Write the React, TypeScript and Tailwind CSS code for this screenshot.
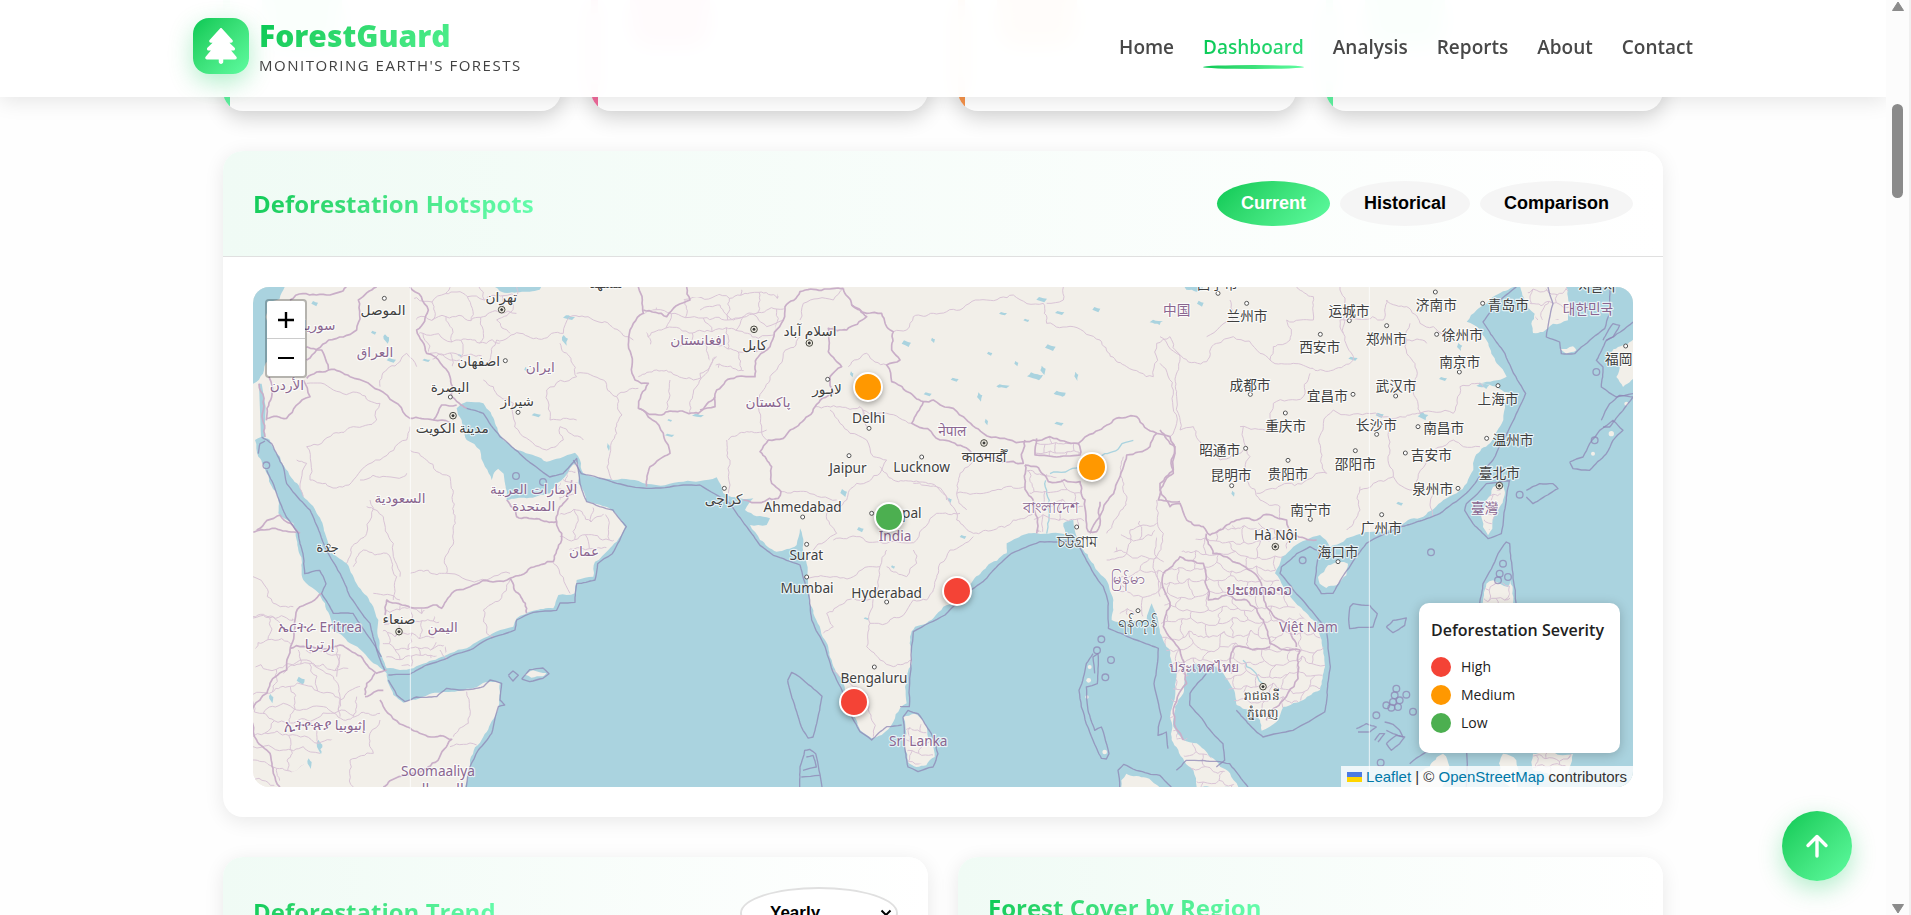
import React from "react";
import { FaTree } from "react-icons/fa6";

type Pt = [number, number];

/* ---------- geometry helpers ---------- */

function seeded(seed: number) {
  let s = seed % 2147483647;
  if (s <= 0) s += 2147483646;
  return () => {
    s = (s * 16807) % 2147483647;
    return s / 2147483647 - 0.5;
  };
}

function parse(text: string): Pt[] {
  return text
    .trim()
    .split(/\s+/)
    .map((p) => p.split(",").map(Number) as Pt);
}

/* Subdivides a polyline by midpoint displacement so that it reads as a surveyed border. */
function rough(text: string, amp = 0.16, closed = false): string {
  let pts = parse(text);
  if (closed) pts = [...pts, pts[0]];
  const rnd = seeded(Math.round(pts[0][0] * 31 + pts[0][1] * 17 + pts.length * 101));
  const out: Pt[] = [pts[0]];
  const split = (a: Pt, b: Pt, depth: number) => {
    const dx = b[0] - a[0];
    const dy = b[1] - a[1];
    const length = Math.hypot(dx, dy);
    if (depth === 0 || length < 14 || length > 600) {
      out.push(b);
      return;
    }
    const k = rnd() * 2 * amp;
    const m: Pt = [(a[0] + b[0]) / 2 - dy * k, (a[1] + b[1]) / 2 + dx * k];
    split(a, m, depth - 1);
    split(m, b, depth - 1);
  };
  for (let i = 1; i < pts.length; i++) split(pts[i - 1], pts[i], 4);
  return "M" + out.map((p) => `${p[0].toFixed(0)},${p[1].toFixed(0)}`).join("L") + (closed ? "Z" : "");
}

/* Irregular honeycomb of province borders that covers a rectangle. */
function mesh(x: number, y: number, w: number, h: number, cell: number): string {
  const rnd = seeded(x * 7 + y * 13 + cell);
  const cols = Math.ceil(w / cell) + 1;
  const rows = Math.ceil(h / cell) + 1;
  const node: Pt[][] = [];
  for (let r = 0; r <= rows; r++) {
    node[r] = [];
    for (let c = 0; c <= cols; c++) {
      node[r][c] = [x + c * cell + rnd() * cell * 0.7, y + r * cell + rnd() * cell * 0.7];
    }
  }
  const seg = (a: Pt, b: Pt) => rough(`${a[0]},${a[1]} ${b[0]},${b[1]}`, 0.2);
  let d = "";
  for (let r = 0; r <= rows; r++) {
    for (let c = 0; c <= cols; c++) {
      if (c < cols) d += seg(node[r][c], node[r][c + 1]);
      if (r < rows && (r + c) % 2 === 0) d += seg(node[r][c], node[r + 1][c]);
    }
  }
  return d;
}

/* ---------- map data: three units to the pixel ---------- */

const ocean =
  "636,1500 651,1419 691,1349 726,1289 739,1249 741,1189 711,1184 631,1209 561,1217 501,1234 451,1247 421,1224 406,1189 401,1159 361,1129 291,1069 236,1024 216,949 151,879 146,819 131,759 121,709 76,679 71,619 41,559 16,509 6,459 24,450 51,459 81,509 121,579 151,629 191,679 216,739 226,789 281,829 316,899 361,959 376,999 379,1079 401,1144 441,1149 481,1144 521,1127 591,1099 641,1084 681,1059 781,1019 791,994 841,971 901,964 916,924 966,919 971,879 1021,869 1026,824 1066,789 1091,764 1116,719 1076,669 1001,644 976,589 971,524 936,569 891,619 821,634 761,639 756,589 731,549 716,579 696,539 681,489 641,459 626,399 611,364 641,344 691,349 726,409 751,459 811,494 881,524 921,514 966,497 981,519 991,559 1081,579 1181,591 1291,584 1391,571 1411,619 1461,634 1501,634 1476,669 1551,694 1541,714 1491,714 1521,759 1571,794 1631,774 1641,724 1651,769 1659,819 1666,909 1681,979 1716,1059 1736,1119 1771,1189 1796,1269 1821,1329 1856,1354 1886,1344 1921,1304 1941,1264 1961,1249 1956,1199 1976,1129 1971,1049 1986,1019 2041,994 2071,959 2111,949 2161,879 2201,839 2261,799 2261,769 2291,754 2351,739 2441,744 2431,709 2461,699 2471,749 2491,789 2511,819 2551,869 2581,939 2576,999 2631,1004 2681,999 2696,949 2721,1039 2751,1089 2771,1159 2766,1229 2751,1289 2756,1359 2776,1389 2821,1449 2831,1500 2956,1500 2931,1459 2901,1439 2871,1409 2831,1369 2791,1359 2761,1319 2766,1259 2791,1219 2801,1159 2821,1129 2881,1134 2911,1159 2936,1199 2951,1254 2991,1269 3021,1299 3026,1331 3071,1304 3091,1259 3151,1239 3201,1209 3216,1139 3206,1059 3181,999 3141,959 3091,899 3066,859 3086,809 3121,779 3161,759 3201,744 3231,779 3281,754 3361,734 3441,714 3511,689 3571,639 3611,619 3661,549 3666,509 3711,469 3751,399 3756,349 3781,324 3731,299 3681,289 3761,269 3731,229 3706,169 3681,129 3641,104 3671,69 3721,29 3781,0 3783,-20 4200,-20 4200,1520 636,1520";

const waters = [
  "0,20 25,0 95,0 80,35 45,50 38,90 48,180 30,260 0,290",
  "705,-10 740,12 800,16 860,8 870,-10",
  "2790,-10 2800,8 2830,14 2850,10 2850,-10",
];

const lakes: [number, number, number, number][] = [
  [143, 1181, 12, 12], [948, 92, 18, 7], [936, 160, 9, 16], [400, 156, 8, 14], [850, 385, 14, 6],
  [1250, 445, 14, 5], [1335, 386, 18, 5], [415, 220, 14, 7], [185, 50, 10, 8], [362, 137, 8, 6],
  [2346, 268, 24, 12], [2420, 320, 18, 9], [2392, 182, 16, 10], [2024, 322, 12, 6], [2105, 278, 12, 6],
  [2250, 298, 20, 6], [2180, 330, 8, 14], [2366, 38, 16, 8], [2420, 78, 14, 6], [2250, 80, 12, 5],
  [2710, 106, 20, 8], [2530, 68, 12, 8], [2418, 410, 14, 6], [2200, 405, 5, 10], [2040, 160, 6, 8],
  [1960, 170, 14, 10], [2320, 100, 9, 5], [2210, 200, 8, 6], [2290, 230, 6, 8], [2470, 268, 6, 14],
  [1822, 728, 10, 8], [3570, 276, 12, 6], [3690, 296, 20, 10], [3510, 388, 16, 12], [3380, 385, 12, 8],
  [3620, 180, 8, 12], [3300, 215, 14, 6], [2940, 620, 5, 9], [1772, 618, 10, 12], [2090, 640, 6, 8],
  [1796, 262, 5, 9], [2370, 250, 8, 14], [200, 1380, 8, 22], [170, 1430, 6, 16], [55, 1235, 6, 14],
  [2842, 50, 10, 9], [1920, 840, 6, 5], [1840, 995, 8, 4], [620, 205, 6, 4], [520, 220, 12, 5],
  [2130, 750, 10, 6], [3440, 650, 10, 6], [1250, 400, 7, 4], [1066, 480, 4, 12], [820, 248, 6, 8],
];

const islands = [
  "1950,1290 1985,1280 2015,1310 2040,1370 2045,1410 2020,1435 1990,1440 1965,1425 1955,1380 1960,1340",
  "815,1163 840,1150 880,1158 870,1168 835,1172",
  "3195,870 3225,835 3260,825 3285,830 3280,865 3250,895 3220,903 3200,890",
  "3700,640 3720,600 3745,590 3752,600 3740,660 3718,725 3705,745 3690,720 3685,680",
  "3790,-20 3945,-20 3955,60 3945,100 3900,110 3870,135 3840,138 3835,110 3845,80 3815,40",
  "3920,185 3960,178 3970,190 3940,200",
  "4060,210 4110,175 4160,150 4160,260 4110,300 4090,270 4100,235 4075,230",
  "2605,1480 2620,1460 2680,1472 2740,1520 2610,1520",
  "3700,890 3720,880 3765,900 3772,880 3775,960 3690,960",
  "3840,1400 3900,1395 3960,1400 3950,1440 3920,1480 3840,1450",
  "3460,1520 3530,1440 3570,1400 3590,1440 3560,1520",
  "3750,1400 3790,1420 3800,1520 3740,1460",
];

const countryBorders = [
  "1341,369 1386,359 1391,309 1451,269 1506,269 1516,209 1551,179 1591,99 1596,59 1641,14 1771,4",
  "1771,4 1796,54 1841,89 1781,129 1726,124 1726,194 1766,239 1731,269 1741,319 1686,359 1641,409 1591,454 1546,459 1521,494 1556,539 1556,589 1584,614 1576,634 1471,639",
  "1796,54 1841,79 1886,79 1921,134 1916,189 1941,219 1901,234 1916,284 2011,344 2041,339 2131,389 2191,439 2241,454 2341,459 2391,449 2476,469 2521,439 2581,399 2651,389 2711,439 2751,449 2766,499 2761,549 2721,589 2716,639 2781,644",
  "2011,344 1976,409 2061,459 2131,479 2191,509 2311,529 2316,459",
  "2351,454 2346,504 2401,509 2481,504 2476,469",
  "2316,534 2351,539 2386,584 2481,584 2496,639 2506,734 2531,734 2541,644",
  "2316,534 2316,599 2346,649 2351,739",
  "2711,439 2691,479 2621,504 2591,589 2561,644 2511,739",
  "1156,0 1171,79 1141,109 1146,279 1186,289 1156,364 1226,384 1336,379 1386,329",
  "1156,364 1231,439 1251,499 1191,539 1181,599",
  "1171,69 1241,89 1311,39 1301,0",
  "471,0 526,69 491,129 521,199 591,269 596,329 641,364",
  "111,39 150,20 231,24 280,0",
  "161,219 311,129 316,39 371,0",
  "161,274 226,249 206,189 161,179",
  "226,249 291,269 471,394 541,399 566,354 611,354",
  "541,399 591,407",
  "41,394 101,394 171,329 151,279",
  "18,290 28,380 36,450",
  "48,270 56,330 40,400",
  "396,984 401,939 551,954 566,964 611,909 771,874 901,824 926,759 926,739 911,704",
  "771,874 821,979",
  "761,639 791,689 911,704 931,649 956,579",
  "206,919 141,959 126,999 111,1089 101,1149 51,1189 21,1239 1,1259 11,1359 51,1399 61,1459 81,1500",
  "111,1084 191,1084 261,1074 371,1159 401,1149",
  "336,1224 341,1189 366,1159",
  "336,1229 391,1210",
  "381,1239 391,1259 461,1319 596,1357 491,1459 391,1500",
  "1,736 131,736",
  "11,729 81,684 141,739",
  "2721,429 2766,479 2761,559 2721,609 2751,659 2781,649 2801,699 2851,719 2871,744 2921,714 2951,699 3011,699 3031,684 3101,699 3121,744 3191,759",
  "2731,859 2781,809 2851,829 2866,939 2921,924 2981,939 3031,999 3051,1069 3141,1089 3136,1149 3091,1239 3040,1300",
  "2946,1079 3051,1079",
  "2946,1079 2931,1119 2936,1159",
  "2731,859 2751,959 2731,1019 2781,1089 2801,1189 2761,1279 2791,1359",
  "2860,740 2880,800 2960,830 3020,880 3040,960 3100,1010 3130,1080",
];

const stateBorders = [
  "1341,69 1401,54 1441,99 1496,79 1541,119 1591,99",
  "1641,99 1651,49 1741,39 1771,4",
  "1516,339 1551,279 1571,249 1591,199 1641,149",
  "1426,459 1481,434 1541,429",
  "1516,339 1526,429 1541,459",
  "1426,619 1431,519 1421,459",
  "1686,359 1761,359 1821,359 1831,389",
  "1731,369 1761,409 1791,439 1841,459 1861,509 1901,519 1881,559 1811,589 1781,639",
  "1786,239 1841,199 1901,234",
  "1841,419 1831,369 1901,379 1976,409",
  "1881,539 1921,579 1981,584 2051,599 2081,639",
  "1584,614 1661,614 1751,639",
  "1681,789 1751,739 1721,679 1781,639",
  "1741,759 1821,749 1901,769 1991,759 2051,679 2121,679",
  "1981,589 2051,599 2086,639 2111,699",
  "2111,619 2191,619 2261,599 2316,599",
  "2111,699 2161,739 2221,729 2281,699 2341,679",
  "2121,559 2111,619 2141,669",
  "2121,559 2181,499",
  "1651,869 1721,869 1801,869 1881,839 1901,789",
  "1721,979 1781,939 1861,929 1881,839",
  "1861,929 1851,1009 1901,1009 1981,939 2021,939",
  "1901,839 1961,869 1991,829 1981,789",
  "1851,1009 1841,1079 1881,1119 1921,1139 1976,1119",
  "2021,939 2061,829 2091,789 2161,749",
  "1736,1149 1801,1199 1841,1219 1861,1349",
  "1711,1039 1741,1019 1721,979",
  "1921,134 1961,129 1981,89 2041,79 2121,69 2201,39 2281,24 2371,49",
  "2371,49 2381,109 2461,119 2541,159 2621,239 2701,269 2711,169 2751,149 2781,209",
  "2431,0 2431,39 2381,49",
  "2751,449 2771,409 2761,309 2721,229",
  "2721,149 2791,214 2861,224 2891,169 2941,149 3021,199 3051,219 3061,179 3111,159 3101,99 3181,99 3181,29 3131,0",
  "2861,149 2901,119 2941,99 2931,39",
  "3051,219 3121,229 3241,249 3301,219 3271,139 3261,99 3391,99 3401,39",
  "3271,139 3261,0",
  "3401,39 3461,59 3501,109 3541,119 3601,159",
  "3461,159 3461,199 3491,269 3501,379",
  "3471,109 3461,159 3521,169",
  "3171,259 3151,329 3061,349 3051,379 3051,429 2961,419",
  "3241,369 3211,409 3221,559 3161,579 3011,619",
  "3241,369 3341,379 3441,389 3501,379 3601,379 3621,299 3691,299",
  "3421,399 3411,489 3421,569 3361,589 3321,609",
  "3421,569 3481,609 3521,519 3601,459 3631,479 3681,479",
  "2971,419 2991,509 2981,579 3021,639",
  "3321,599 3321,669 3281,729",
  "3541,619 3541,689",
  "2781,209 2771,329 2781,429 2821,419 2851,479 2901,519 2971,489",
  "3021,639 3081,659 3081,699",
  "2611,509 2621,639 2561,739",
  "2711,639 2731,739 2701,829 2721,929",
  "2561,819 2621,799 2631,729 2711,709",
  "531,199 601,219 671,239 711,219 731,159 801,139 931,139",
  "771,139 731,99 781,59 791,0",
  "931,139 951,89 1021,99 1141,159",
  "691,279 741,329 781,349 801,439 881,489 931,459 921,419 991,459",
  "921,169 971,269 881,309 891,399 971,399",
  "971,259 1051,279 1091,329 1091,439 1071,499 1076,579",
  "1091,329 1156,304",
  "1251,279 1241,369",
  "1311,379 1341,259 1386,209",
  "1156,269 1211,249 1321,279 1391,209",
  "161,289 241,309 321,319 381,349 371,399 301,419",
  "381,299 461,199 491,239",
  "301,419 241,439 161,479 171,579 231,599 301,579 381,519 461,459 471,419",
  "321,579 401,569 451,569 461,559",
  "151,629 161,529 131,519",
  "351,639 341,739 281,829",
  "341,659 391,689 421,769 441,869",
  "471,489 521,519 591,569 601,679 601,739 581,859",
  "471,859 581,859 771,859",
  "901,829 951,919",
  "771,879 741,939 691,969 701,1039 721,1049",
  "301,839 331,789 401,799 431,869 421,939",
  "361,919 441,939",
  "91,1159 161,1119 241,1169 261,1229 261,1289",
  "251,1079 251,1169",
  "0,869 61,949 121,959",
  "0,989 61,989 81,1009",
  "31,1279 91,1249 131,1269 211,1259 271,1299 381,1279",
  "641,1214 646,1309 601,1349",
  "591,1379 671,1374",
  "301,1500 291,1419 361,1399 351,1339 381,1299",
  "0,1379 91,1389 151,1379 201,1399",
  "311,1229 301,1289",
  "581,1119 561,1089",
];

const meshes: { id: string; clip: string; cell: number }[] = [
  { id: "indochina", cell: 40, clip: "2735,859 2781,800 2851,740 3000,700 3121,744 3061,859 3091,899 3206,1059 3216,1139 3201,1209 3091,1259 3026,1320 2951,1254 2911,1159 2821,1129 2766,1259 2761,1319 2871,1409 2950,1500 2836,1500 2780,1390 2751,1300 2771,1159 2721,1039" },
  { id: "bhutan", cell: 22, clip: "2351,464 2391,449 2476,469 2481,504 2401,509 2346,504" },
  { id: "yemen", cell: 36, clip: "400,960 490,955 560,1000 540,1060 600,1090 470,1140 404,1130 384,1050" },
  { id: "afghan", cell: 52, clip: "1171,79 1311,30 1560,0 1596,59 1551,179 1451,269 1341,200 1180,170" },
  { id: "iran", cell: 58, clip: "480,0 800,0 790,80 740,170 620,240 540,220 495,130" },
  { id: "ethiopia", cell: 70, clip: "0,960 130,1000 111,1089 250,1080 336,1224 300,1290 200,1400 60,1500 0,1500" },
  { id: "lanka", cell: 34, clip: "1960,1320 2010,1310 2040,1370 2040,1420 1990,1436 1962,1420" },
  { id: "taiwan", cell: 26, clip: "3705,630 3745,595 3740,660 3710,730 3690,710" },
  { id: "korea", cell: 38, clip: "3820,0 3945,0 3950,90 3850,100" },
  { id: "luzon", cell: 32, clip: "3700,890 3770,890 3775,960 3690,960" },
  { id: "mindanao", cell: 32, clip: "3840,1400 3960,1400 3920,1480 3840,1450" },
  { id: "emirates", cell: 24, clip: "915,600 965,530 975,600 950,640 920,640" },
  { id: "bengal", cell: 44, clip: "2316,540 2480,590 2500,730 2351,735" },
  { id: "oman", cell: 56, clip: "920,680 1000,650 1100,700 1080,770 1030,800 920,780" },
  { id: "burma", cell: 60, clip: "2570,820 2620,700 2700,700 2740,850 2720,940 2690,990 2600,980 2580,900" },
];

const seaBorders = [
  "1341,594 1431,649 1481,719 1521,775 1561,805 1641,834 1666,919 1676,999 1716,1079 1751,1179 1791,1279 1821,1334 1856,1359 1901,1319 1946,1314",
  "1941,1259 1969,1259 1981,1034 2076,984 2111,949 2201,874 2276,799 2361,764 2471,764 2500,820 2551,899 2566,949 2566,1024 2716,1084 2703,1190 2725,1289 2716,1320 2715,1345 2740,1335 2745,1385",
  "1950,1290 1965,1270 1995,1280 2035,1340 2055,1400 2040,1440 1995,1454 1965,1440 1955,1380 1950,1290",
  "1604,1180 1616,1156 1640,1170 1707,1228 1700,1270 1680,1350 1665,1353 1650,1330 1620,1240 1604,1180",
  "1640,1500 1641,1440 1655,1390 1670,1387 1688,1400 1707,1500",
  "1660,1410 1680,1405 1690,1440 1650,1450",
  "1645,1470 1700,1465",
  "26,450 56,470 91,540 101,590 141,639 171,669 201,739 221,789 261,859 291,929 351,1009 371,1089 395,1150",
  "16,500 21,470 36,462",
  "41,550 71,620 100,690 136,740 150,800 155,860 200,850 219,890 206,919 241,979 300,979 340,1040 385,1110",
  "406,1164 470,1162 521,1134 601,1104 651,1089 691,1064 786,1029 791,999 841,976 911,970 921,948 966,946 971,890 1026,879 1034,830 1078,800 1100,760 1120,719 1080,669 1001,644 981,589 971,514 930,560 890,570 811,510 741,449 691,379 641,364",
  "406,1179 431,1224 456,1244 491,1230 551,1229 581,1204 631,1209 691,1199 711,1179 746,1189 741,1239 755,1254 736,1259 716,1339 676,1389 651,1439 640,1500",
  "766,1165 780,1152 796,1165 780,1182 766,1165",
  "806,1176 830,1148 870,1143 888,1160 870,1174 830,1184 806,1176",
  "961,519 985,560 1091,589 1181,604 1291,594 1341,594",
  "2525,1159 2520,1110 2535,1100 2533,1190 2500,1200 2505,1270 2525,1330 2545,1320 2555,1350 2568,1400 2560,1416 2545,1414 2520,1360 2485,1260 2478,1210 2500,1130 2520,1100",
  "2600,1500 2595,1450 2612,1432 2650,1450 2720,1465 2755,1500",
  "2860,1160 2811,1219 2810,1254 2880,1340 2910,1370 2915,1420 2890,1440",
  "2950,1270 3030,1350 3120,1330 3215,1275 3232,1139 3221,1029 3190,989 3130,920 3081,859 3085,840 3131,800 3171,779",
  "3171,779 3200,794 3185,890 3205,920 3240,919 3340,769 3440,720 3560,680 3640,619 3720,519 3818,319 3800,290 3756,200 3690,105 3740,40 3790,0",
  "3291,959 3300,950 3350,955 3373,980 3360,1020 3290,1025 3288,1010 3291,959",
  "3400,1020 3420,1000 3460,993 3455,1015 3420,1037 3400,1020",
  "3640,650 3700,590 3770,580 3760,640 3745,740 3705,755 3660,710 3635,670 3640,650",
  "3640,1500 3680,950 3690,890 3735,800 3760,765 3770,770 3780,860 3790,960",
  "3885,0 3900,50 3880,150 3920,165 3925,200 3965,200 3985,180 4055,125 4070,80 4070,0",
  "4050,160 4080,110 4100,115 4080,150 4060,160",
  "4140,105 4060,160 4030,220 4050,240 4045,300 4090,330 4140,320",
  "3950,525 3990,510 4010,470 4040,430 4080,400 4110,430 4080,460 4060,500 4010,550 3960,545 3950,525",
  "4045,400 4070,350 4100,325 4140,330 4110,370 4070,420 4050,420",
  "3820,610 3860,590 3900,590 3915,605 3890,620 3840,650 3820,630",
  "3470,1430 3520,1395 3560,1390 3620,1395",
  "3310,1325 3340,1310 3370,1320 3350,1335 3315,1335",
  "3395,1305 3420,1312 3440,1330 3450,1350 3420,1340 3400,1330",
  "3400,1370 3430,1345 3455,1350 3440,1370 3415,1390 3400,1370",
  "3365,1360 3380,1340 3395,1340 3375,1365",
  "2770,1450 2800,1420 2850,1420 2930,1430 2985,1500",
];

const atolls: Pt[] = [
  [2545, 1057], [2532, 1090], [2574, 1119], [2557, 1171], [789, 567], [40, 535], [870, 585], [3149, 820],
  [3534, 796], [3430, 1205], [3425, 1225], [3460, 1223], [3420, 1245], [3435, 1260], [3400, 1255],
  [3370, 1285], [3440, 1240], [3480, 1274], [3415, 1262], [3383, 1427], [4030, 255], [4025, 460], [3800, 623],
  [3740, 860], [3750, 830], [3765, 870], [3735, 880],
];

type Label = { x: number; y: number; t: string; c?: boolean; s?: number };
const labels: Label[] = [
  { x: 390, y: 85, t: "الموصل" }, { x: 198, y: 130, t: "سوريا", c: true }, { x: 366, y: 210, t: "العراق", c: true },
  { x: 102, y: 308, t: "الأردن", c: true }, { x: 745, y: 46, t: "تهران" }, { x: 677, y: 238, t: "اصفهان" },
  { x: 862, y: 256, t: "ایران", c: true }, { x: 591, y: 315, t: "البصرة" }, { x: 793, y: 358, t: "شیراز" },
  { x: 598, y: 438, t: "مدينة الكويت" }, { x: 441, y: 648, t: "السعودية", c: true },
  { x: 842, y: 622, t: "الإمارات العربية", c: true }, { x: 842, y: 672, t: "المتحدة", c: true },
  { x: 224, y: 794, t: "جدة" }, { x: 993, y: 807, t: "عمان", c: true }, { x: 438, y: 1010, t: "صنعاء" },
  { x: 569, y: 1035, t: "اليمن", c: true }, { x: 201, y: 1035, t: "ኤርትራ Eritrea", c: true },
  { x: 200, y: 1086, t: "إرتريا", c: true }, { x: 216, y: 1328, t: "ኢትዮጵያ إثيوبيا", c: true },
  { x: 555, y: 1468, t: "Soomaaliya", c: true }, { x: 560, y: 1518, t: "الصومال", c: true },
  { x: 1060, y: 2, t: "مشهد" },
  { x: 1335, y: 174, t: "افغانستان", c: true }, { x: 1505, y: 188, t: "کابل" }, { x: 1671, y: 146, t: "اسلام آباد" },
  { x: 1722, y: 322, t: "لاہور" }, { x: 1545, y: 361, t: "پاکستان", c: true }, { x: 1412, y: 650, t: "کراچی" },
  { x: 1847, y: 408, t: "Delhi" }, { x: 1785, y: 558, t: "Jaipur" }, { x: 2006, y: 554, t: "Lucknow" },
  { x: 2098, y: 446, t: "नेपाल", c: true }, { x: 2193, y: 526, t: "काठमाडौँ" }, { x: 1649, y: 675, t: "Ahmedabad" },
  { x: 1938, y: 694, t: "Bhopal" }, { x: 1926, y: 762, t: "India", c: true },
  { x: 2393, y: 678, t: "বাংলাদেশ", c: true, s: 44 }, { x: 2471, y: 780, t: "চট্টগ্রাম", s: 44 },
  { x: 1660, y: 820, t: "Surat" }, { x: 1662, y: 918, t: "Mumbai" }, { x: 1901, y: 932, t: "Hyderabad" },
  { x: 1863, y: 1188, t: "Bengaluru" }, { x: 1996, y: 1377, t: "Sri Lanka", c: true },
  { x: 2624, y: 892, t: "မြန်မာ", c: true, s: 44 }, { x: 2655, y: 1020, t: "ရန်ကုန်", s: 44 },
  { x: 3019, y: 925, t: "ປະເທດລາວ", c: true }, { x: 3166, y: 1035, t: "Việt Nam", c: true },
  { x: 2854, y: 1154, t: "ประเทศไทย", c: true }, { x: 3028, y: 1240, t: "រាជធានី", s: 36 }, { x: 3028, y: 1290, t: "ភ្នំពេញ", s: 36 },
  { x: 2771, y: 84, t: "中国", c: true }, { x: 2982, y: 101, t: "兰州市" }, { x: 3288, y: 87, t: "运城市" },
  { x: 3550, y: 70, t: "济南市" }, { x: 3766, y: 69, t: "青岛市" }, { x: 4005, y: 80, t: "대한민국", c: true },
  { x: 4032, y: 12, t: "서울시" }, { x: 2893, y: 5, t: "西宁市" }, { x: 3400, y: 171, t: "郑州市" },
  { x: 3628, y: 160, t: "徐州市" }, { x: 3200, y: 196, t: "西安市" }, { x: 3620, y: 240, t: "南京市" },
  { x: 4097, y: 231, t: "福岡" }, { x: 2991, y: 309, t: "成都市" }, { x: 3223, y: 342, t: "宜昌市" },
  { x: 3429, y: 312, t: "武汉市" }, { x: 3735, y: 351, t: "上海市" }, { x: 3098, y: 432, t: "重庆市" },
  { x: 3370, y: 428, t: "长沙市" }, { x: 3572, y: 439, t: "南昌市" }, { x: 3780, y: 474, t: "温州市" },
  { x: 2900, y: 505, t: "昭通市" }, { x: 3105, y: 576, t: "贵阳市" }, { x: 3307, y: 545, t: "邵阳市" },
  { x: 3535, y: 518, t: "吉安市" }, { x: 2934, y: 580, t: "昆明市" }, { x: 3739, y: 573, t: "臺北市" },
  { x: 3539, y: 622, t: "泉州市" }, { x: 3695, y: 678, t: "臺灣", c: true }, { x: 3173, y: 683, t: "南宁市" },
  { x: 3385, y: 738, t: "广州市" }, { x: 3068, y: 759, t: "Hà Nội" }, { x: 3255, y: 811, t: "海口市" },
];

const towns: Pt[] = [
  [394, 34], [757, 221], [592, 330], [795, 376], [226, 778], [1724, 277], [1848, 424], [1788, 506], [2006, 510],
  [1414, 604], [1649, 690], [1856, 679], [1661, 772], [1661, 870], [1901, 945], [1864, 1140], [2471, 720],
  [2655, 971], [2895, 19], [2981, 49], [3289, 101], [3547, 15], [3689, 49], [3401, 116], [3551, 142], [3202, 142],
  [3619, 255], [4118, 177], [2992, 322], [3300, 322], [3428, 327], [3735, 296], [3097, 378], [3371, 442],
  [3495, 419], [3701, 454], [2978, 484], [3105, 520], [3307, 491], [3457, 498], [2936, 596], [3615, 604],
  [3172, 697], [3386, 683], [3255, 824],
];
const capitals: Pt[] = [
  [746, 68], [600, 386], [438, 1034], [1503, 127], [1669, 168], [2193, 468], [3067, 779], [3739, 596], [3030, 1199],
];

const hotspots = [
  { name: "Himachal Pradesh", level: "Medium", x: 615, y: 100, color: "bg-[#ff9800]" },
  { name: "Assam", level: "Medium", x: 839, y: 180, color: "bg-[#ff9800]" },
  { name: "Madhya Pradesh", level: "Low", x: 636, y: 230, color: "bg-[#4caf50]" },
  { name: "Andhra Pradesh", level: "High", x: 704, y: 304, color: "bg-[#f44336]" },
  { name: "Kerala", level: "High", x: 601, y: 415, color: "bg-[#f44336]" },
];

function BaseMap() {
  return (
    <svg viewBox="0 0 4140 1500" className="h-[500px] w-[1380px]" aria-label="Map of South Asia">
      <defs>
        {meshes.map((m) => (
          <clipPath id={m.id} key={m.id}>
            <path d={rough(m.clip, 0.05, true)} />
          </clipPath>
        ))}
      </defs>
      <rect width="4140" height="1500" fill="#f2efe9" />
      <g fill="#aad3df">
        <path d={rough(ocean, 0.09, true)} />
        {waters.map((w) => <path key={w} d={rough(w, 0.1, true)} />)}
        {lakes.map(([x, y, a, b]) => (
          <path
            key={`${x}-${y}`}
            d={rough(`${x - a},${y} ${x - a / 2},${y - b} ${x + a / 3},${y - b / 2} ${x + a},${y - b / 3} ${x + a / 2},${y + b} ${x - a / 4},${y + b / 2}`, 0.25, true)}
          />
        ))}
        <path d="M18,290L26,290L38,360L34,450L24,455Z" />
      </g>
      <g fill="none" stroke="#aad3df" strokeWidth="4">
        <path d={rough("2391,560 2481,540 2541,510 2600,480 2641,460")} />
        <path d={rough("2381,740 2385,660 2378,580")} />
        <path d={rough("2970,1120 3000,1150 3030,1190")} />
      </g>
      <g fill="#f2efe9">
        {islands.map((w) => <path key={w} d={rough(w, 0.12, true)} />)}
        <path d="M722,560L735,545L752,560L757,600L740,620L724,600Z" />
        <circle cx="4020" cy="500" r="6" /><circle cx="4075" cy="440" r="8" /><circle cx="4120" cy="350" r="6" />
        <circle cx="2510" cy="1140" r="6" /><circle cx="2507" cy="1180" r="7" /><circle cx="2502" cy="1230" r="5" /><circle cx="2555" cy="1395" r="7" />
      </g>
      <g fill="none" stroke="#d9c4d6" strokeWidth="3" strokeLinejoin="round">
        {meshes.map((m) => {
          const pts = parse(m.clip);
          const xs = pts.map((p) => p[0]);
          const ys = pts.map((p) => p[1]);
          const x = Math.min(...xs);
          const y = Math.min(...ys);
          return <path key={m.id} clipPath={`url(#${m.id})`} d={mesh(x - 20, y - 20, Math.max(...xs) - x + 40, Math.max(...ys) - y + 40, m.cell)} />;
        })}
        {stateBorders.map((b) => <path key={b} d={rough(b)} />)}
      </g>
      <g fill="none" stroke="#c9aec8" strokeWidth="5" strokeLinejoin="round">
        {countryBorders.map((b) => <path key={b} d={rough(b, 0.12)} />)}
      </g>
      <g fill="none" stroke="#8e86b4" strokeOpacity="0.75" strokeWidth="4" strokeLinejoin="round">
        {seaBorders.map((b) => <path key={b} d={rough(b, 0.03)} />)}
        {atolls.map(([x, y]) => <circle key={`${x}-${y}`} cx={x} cy={y} r="10" />)}
      </g>
      <g stroke="#ffffff" strokeOpacity="0.75" strokeWidth="3">
        <path d="M472,0V1500M3349,0V1500" />
      </g>
      <g fill="#ffffff" stroke="#555555" strokeWidth="3">
        {towns.map(([x, y]) => <circle key={`${x}-${y}`} cx={x} cy={y} r="6" />)}
        {capitals.map(([x, y]) => (
          <g key={`${x}-${y}`}>
            <circle cx={x} cy={y} r="10" fill="#e9e6dc" stroke="#4c4c44" />
            <circle cx={x} cy={y} r="3" fill="#333333" stroke="#333333" />
          </g>
        ))}
      </g>
      <g
        className="font-['Noto_Sans','Noto_Sans_CJK_SC','DejaVu_Sans',sans-serif]"
        textAnchor="middle"
        stroke="#ffffff"
        strokeOpacity="0.7"
        strokeWidth="7"
        strokeLinejoin="round"
        paintOrder="stroke"
      >
        {labels.map((l) => (
          <text key={l.t} x={l.x} y={l.y} fontSize={l.s ?? 41} fill={l.c ? "#8a6690" : "#3f3f3f"}>{l.t}</text>
        ))}
      </g>
    </svg>
  );
}

/* ---------- page parts ---------- */

const navItems = ["Home", "Dashboard", "Analysis", "Reports", "About", "Contact"];

function Header() {
  return (
    <header className="absolute inset-x-0 top-0 z-20 h-[97px] bg-white/95 shadow-[0_4px_20px_rgba(0,0,0,0.1)] backdrop-blur-[10px]">
      <div className="mx-auto flex h-full max-w-[1500px] items-start justify-between">
        <a href="#home" className="flex gap-2.5 pt-[18px]">
          <span className="flex size-14 items-center justify-center rounded-2xl bg-linear-135 from-[#00c853] to-[#5efca0] shadow-[0_8px_24px_rgba(0,200,83,0.3)]">
            <FaTree className="size-9 text-white" />
          </span>
          <span className="flex flex-col">
            <span className="bg-linear-135 from-[#00c853] to-[#5efca0] bg-clip-text text-[30px] leading-9 font-extrabold text-transparent">ForestGuard</span>
            <span className="text-[15px] leading-[22px] tracking-[1.5px] text-[#424242] uppercase">Monitoring Earth's Forests</span>
          </span>
        </a>
        <nav className="flex gap-[29px] pt-8">
          {navItems.map((item) => (
            <a
              key={item}
              href={`#${item.toLowerCase()}`}
              className={
                item === "Dashboard"
                  ? "flex flex-col gap-[3px] text-[19px] leading-[30px] font-semibold text-[#00c853]"
                  : "text-[19px] leading-[30px] font-semibold text-[#484848]"
              }
            >
              {item === "Dashboard" ? (
                <>
                  <span className="bg-linear-135 from-[#00c853] to-[#2fdc79] bg-clip-text text-transparent">{item}</span>
                  <span className="h-1 rounded-[50%] bg-linear-90 from-[#00c853] to-[#5efca0]" />
                </>
              ) : (
                item
              )}
            </a>
          ))}
        </nav>
      </div>
    </header>
  );
}

const stats = [
  { id: "cover", bar: "bg-[#5ef3a0]", icon: "bg-[#5ef3a0]/60" },
  { id: "loss", bar: "bg-[#f06a9b]", icon: "bg-[#f06a9b]/60" },
  { id: "alerts", bar: "bg-[#f5924a]", icon: "bg-[#f9a25c]/60" },
  { id: "growth", bar: "bg-[#5ef3a0]", icon: "bg-[#5ef3a0]/60" },
];

function StatCards() {
  return (
    <section className="grid h-[111px] grid-cols-4 gap-[30px]">
      {stats.map((s) => (
        <div key={s.id} className="flex overflow-hidden rounded-b-[20px] bg-white shadow-[0_8px_20px_rgba(0,0,0,0.16)]">
          <div className={`w-[7px] ${s.bar}`} />
          <div className={`ml-8 size-[80px] -mt-8 rounded-[20px] ${s.icon}`} />
        </div>
      ))}
    </section>
  );
}

const panel = "overflow-hidden rounded-[20px] bg-white shadow-[0_4px_20px_rgba(0,0,0,0.09)]";
const panelHead = "flex items-start justify-between border-b border-[#e0e0e0] bg-linear-90 from-[#f0fbf5] to-white p-[30px]";
const panelTitle = "bg-linear-135 from-[#00c853] to-[#69ffb0] bg-clip-text text-[24px] leading-[34px] font-bold text-transparent";

function Hotspots() {
  return (
    <section className={panel}>
      <div className={panelHead}>
        <h2 className={`${panelTitle} pt-1.5`}>Deforestation Hotspots</h2>
        <div className="flex gap-2.5 font-['Liberation_Sans',Arial,sans-serif] text-[18px] leading-[21px] font-bold">
          <button className="h-[45px] rounded-[50%] bg-linear-135 from-[#00c853] to-[#5efca0] px-6 text-white">Current</button>
          <button className="h-[45px] rounded-[50%] bg-[#f5f5f5] px-6 text-black">Historical</button>
          <button className="h-[45px] rounded-[50%] bg-[#f5f5f5] px-6 text-black">Comparison</button>
        </div>
      </div>
      <div className="p-[30px]">
        <div className="relative h-[500px] overflow-hidden rounded-2xl bg-[#f2efe9]">
          <div className="absolute top-0 left-1/2 w-[1380px] -translate-x-1/2">
            <BaseMap />
            {hotspots.map((h) => (
              <button
                key={h.name}
                aria-label={`${h.name}: ${h.level}`}
                className={`absolute size-[30px] -translate-1/2 rounded-full border-2 border-white shadow-[0_2px_6px_rgba(0,0,0,0.35)] ${h.color}`}
                style={{ left: h.x, top: h.y }}
              />
            ))}
          </div>
          <div className="absolute top-3 left-3 flex flex-col overflow-hidden rounded border-2 border-black/25 bg-white bg-clip-padding">
            <button aria-label="Zoom in" className="flex size-[38px] items-center justify-center border-b border-[#cccccc]">
              <svg viewBox="0 0 16 16" className="size-4"><path d="M8 0V16M0 8H16" stroke="#000" strokeWidth="2.400" /></svg>
            </button>
            <button aria-label="Zoom out" className="flex h-[37px] w-[38px] items-center justify-center">
              <svg viewBox="0 0 16 16" className="size-4"><path d="M0 8H16" stroke="#000" strokeWidth="2" /></svg>
            </button>
          </div>
          <div className="absolute right-[13px] bottom-[34px] flex w-[201px] flex-col rounded-[10px] bg-white px-3 pt-3 pb-5 text-[#212121] shadow-[0_2px_12px_rgba(0,0,0,0.22)]">
            <h3 className="text-[16px] leading-[30px] font-semibold whitespace-nowrap">Deforestation Severity</h3>
            <ul className="flex flex-col gap-2 pt-3 text-[14px] leading-5">
              <li className="flex gap-2.5"><span className="size-5 rounded-full bg-[#f44336]" />High</li>
              <li className="flex gap-2.5"><span className="size-5 rounded-full bg-[#ff9800]" />Medium</li>
              <li className="flex gap-2.5"><span className="size-5 rounded-full bg-[#4caf50]" />Low</li>
            </ul>
          </div>
          <div className="absolute right-0 bottom-0 flex h-[21px] items-center gap-1 bg-white/80 px-1.5 font-['Liberation_Sans',Arial,sans-serif] text-[15px] leading-[21px] text-[#333333]">
            <svg viewBox="0 0 15 10" className="h-2.5 w-[15px]">
              <path fill="#4c7be1" d="M0 0h15v5H0z" />
              <path fill="#ffd500" d="M0 5h15v5H0z" />
            </svg>
            <span>
              <a href="#leaflet" className="text-[#0078a8]">Leaflet</a> | © <a href="#osm" className="text-[#0078a8]">OpenStreetMap</a> contributors
            </span>
          </div>
        </div>
      </div>
    </section>
  );
}

function Charts() {
  return (
    <section className="grid grid-cols-2 gap-[30px]">
      <div className={panel}>
        <div className={panelHead}>
          <h2 className={`${panelTitle} pt-2`}>Deforestation Trend</h2>
          <label className="relative block">
            <span className="sr-only">Period</span>
            <select className="h-[52px] w-[158px] appearance-none rounded-[50%] border-2 border-[#e0e0e0] bg-white px-7 font-['Liberation_Sans',Arial,sans-serif] text-[17px] font-bold text-black">
              <option>Yearly</option>
              <option>Monthly</option>
            </select>
            <svg viewBox="0 0 12 8" className="pointer-events-none absolute top-[22px] right-1.5 h-2 w-3">
              <path d="M1.500 1.500L6 6L10.500 1.500" fill="none" stroke="#000" strokeWidth="2" />
            </svg>
          </label>
        </div>
        <div className="h-72" />
      </div>
      <div className={panel}>
        <div className={panelHead}>
          <h2 className={`${panelTitle} pt-1`}>Forest Cover by Region</h2>
        </div>
        <div className="h-72" />
      </div>
    </section>
  );
}

function Scrollbar() {
  return (
    <div aria-hidden="true" className="z-30 flex w-[25px] shrink-0 flex-col items-center justify-between border-r-2 border-[#f0f0f0] bg-[#fcfcfc]">
      <div className="flex flex-col items-center gap-[92px]">
        <svg viewBox="0 0 14 12" className="h-3 w-3.5"><path d="M7 2L12.500 10.500H1.500Z" fill="#8b8b8b" stroke="#8b8b8b" strokeLinejoin="round" /></svg>
        <div className="h-[94px] w-[11px] rounded-full bg-[#8b8b8b]" />
      </div>
      <svg viewBox="0 0 14 12" className="h-3 w-3.5"><path d="M7 10L12.500 1.500H1.500Z" fill="#8b8b8b" stroke="#8b8b8b" strokeLinejoin="round" /></svg>
    </div>
  );
}

export default function App() {
  return (
    <div className="flex h-screen overflow-hidden bg-[#fefefe] font-['Open_Sans','Noto_Sans',sans-serif]">
      <div className="relative min-w-0 flex-1 overflow-hidden">
        <Header />
        <main className="mx-auto flex max-w-[1440px] flex-col gap-10">
          <StatCards />
          <Hotspots />
          <Charts />
        </main>
        <button
          aria-label="Back to top"
          className="absolute right-[34px] bottom-[34px] z-10 flex size-[70px] items-center justify-center rounded-full bg-linear-135 from-[#00c853] to-[#5efca0] shadow-[0_8px_24px_rgba(0,200,83,0.3)]"
        >
          <svg viewBox="0 0 24 24" className="size-6"><path d="M12 22V2.500M3 11.500L12 2.500L21 11.500" fill="none" stroke="#fff" strokeWidth="3.400" strokeLinecap="round" strokeLinejoin="round" /></svg>
        </button>
      </div>
      <Scrollbar />
    </div>
  );
}
